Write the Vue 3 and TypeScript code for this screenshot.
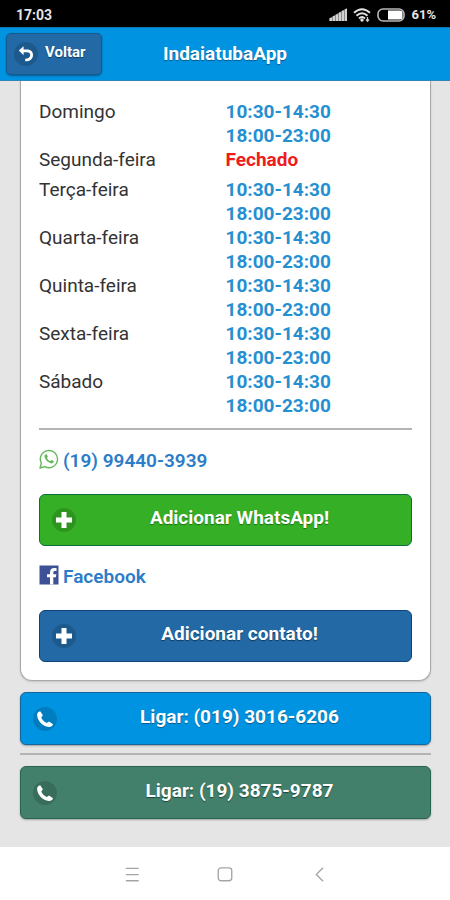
<script setup lang="ts">
interface DaySchedule {
  day: string
  hours: string[]
  closed?: boolean
}

const open: string[] = ['10:30-14:30', '18:00-23:00']

const schedule: DaySchedule[] = [
  { day: 'Domingo', hours: open },
  { day: 'Segunda-feira', hours: ['Fechado'], closed: true },
  { day: 'Terça-feira', hours: open },
  { day: 'Quarta-feira', hours: open },
  { day: 'Quinta-feira', hours: open },
  { day: 'Sexta-feira', hours: open },
  { day: 'Sábado', hours: open },
]
</script>

<template>
  <div class="screen">
    <div class="status">
      <span>17:03</span>
      <div class="status-icons">
        <svg class="signal" viewBox="0 0 18 13" aria-hidden="true">
          <path d="M0 13V10.600L18 0V13Z" fill="#8a8a8a" />
          <path d="M1 13v-3h2v3zM4 13v-5h2v5zM7 13V6.500h2V13zM10 13V4.500h2V13zM13 13V2.800h2V13zM16 13V1h2v12z" fill="#d2d2d2" />
        </svg>
        <svg class="wifi" viewBox="0 0 18 14" aria-hidden="true">
          <g fill="none" stroke="#e2e2e2" stroke-width="2">
            <path d="M1 4.800Q9-2.400 17 4.800" />
            <path d="M3.500 7.700Q9 2.800 14.500 7.700" />
            <path d="M6 10.400Q9 7.700 12 10.400" />
          </g>
          <circle cx="9" cy="12" r="1.700" fill="#e2e2e2" />
          <path d="M14.500 9v4M13 11.500l1.500 1.800 1.500-1.800" fill="none" stroke="#d0d0d0" stroke-width="1.200" />
        </svg>
        <svg class="battery" viewBox="0 0 28 14" aria-hidden="true">
          <rect x="1" y="1" width="26" height="12" rx="5" fill="none" stroke="#b8b8b8" stroke-width="1.600" />
          <path d="M11 2.500h12q2.500 0 2.500 2.500v4q0 2.500-2.500 2.500H11z" fill="#fff" />
        </svg>
        <span class="percent">61%</span>
      </div>
    </div>

    <header class="bar">
      <button class="back" type="button">
        <span class="disc">
          <svg viewBox="0 0 16 16" aria-hidden="true">
            <path d="M0.800 4.600 5.600 0.300V3.400H9.200C12.900 3.400 15 5.700 15 8.900 15 12.800 11.800 15.300 7.200 15.300V12.800C10.200 12.800 12.200 11.300 12.200 9 12.200 7.200 11 6.200 9 6.200H5.600V9.200Z" fill="#fff" />
          </svg>
        </span>
        <span class="label">Voltar</span>
      </button>
      <h1>IndaiatubaApp</h1>
    </header>

    <main>
      <section class="card">
        <table>
          <tbody>
            <tr v-for="item in schedule" :key="item.day" :class="{ closed: item.closed }">
              <th scope="row">{{ item.day }}</th>
              <td>
                <div v-for="slot in item.hours" :key="slot">{{ slot }}</div>
              </td>
            </tr>
          </tbody>
        </table>

        <hr />

        <a class="contact" href="https://wa.me/5519994403939">
          <svg viewBox="0 0 20 20" aria-hidden="true">
            <path d="M1 19 2.400 14.200A8.600 8.600 0 1 1 5.800 17.600Z" fill="none" stroke="#62b957" stroke-width="1.400" stroke-linejoin="round" />
            <path d="M7 5.300C6.300 5.300 5.400 6.200 5.500 7.600 5.700 10.400 9.500 14.200 12.500 14.400 14 14.400 15 13.200 14.800 12.100L12.500 10.900 11.300 12.100C9.800 11.500 8.600 10.300 8 8.900L8.800 7.800 7.900 5.500Z" fill="#62b957" />
          </svg>
          (19) 99440-3939
        </a>

        <button class="action green" type="button">
          <span class="disc">
            <svg viewBox="0 0 16 16" aria-hidden="true"><path d="M5.500 0h5v5.500H16v5h-5.500V16h-5v-5.500H0v-5h5.500z" fill="#fff" /></svg>
          </span>
          <span class="label">Adicionar WhatsApp!</span>
        </button>

        <a class="contact" href="https://www.facebook.com/">
          <svg viewBox="0 0 20 20" aria-hidden="true">
            <rect x="0.500" y="0.500" width="19" height="19" fill="#3c5295" />
            <path d="M11 19.500V12.300H8V9.300h3V7.400C11 4.500 12.700 3 15.300 3H17.500V6H15.900C14.700 6 14.300 6.500 14.300 7.600V9.300H17.300L16.900 12.300H14.300V19.500Z" fill="#fff" />
          </svg>
          Facebook
        </a>

        <button class="action navy" type="button">
          <span class="disc">
            <svg viewBox="0 0 16 16" aria-hidden="true"><path d="M5.500 0h5v5.500H16v5h-5.500V16h-5v-5.500H0v-5h5.500z" fill="#fff" /></svg>
          </span>
          <span class="label">Adicionar contato!</span>
        </button>
      </section>

      <a class="action sky" href="tel:01930166206">
        <span class="disc">
          <svg viewBox="0 0 16 16" aria-hidden="true"><path d="M3.200 0.300 5.900 4.300 4.300 6.400C5.200 8.900 7.200 10.900 9.800 12L12 10.600 16 13.200C15.600 15 13.900 16 11.800 15.900 5.800 15.600 0.200 9.500 0.100 4 0.100 2 1.300 0.500 3.200 0.300Z" fill="#fff" /></svg>
        </span>
        <span class="label">Ligar: (019) 3016-6206</span>
      </a>
      <hr />
      <a class="action moss" href="tel:1938759787">
        <span class="disc">
          <svg viewBox="0 0 16 16" aria-hidden="true"><path d="M3.200 0.300 5.900 4.300 4.300 6.400C5.200 8.900 7.200 10.900 9.800 12L12 10.600 16 13.200C15.600 15 13.900 16 11.800 15.900 5.800 15.600 0.200 9.500 0.100 4 0.100 2 1.300 0.500 3.200 0.300Z" fill="#fff" /></svg>
        </span>
        <span class="label">Ligar: (19) 3875-9787</span>
      </a>
    </main>

    <nav class="system">
      <button type="button" aria-label="Menu">
        <svg viewBox="0 0 16 16" aria-hidden="true"><path d="M2.500 3h11.500M2.500 8.500h11.500M2.500 14h11.500" /></svg>
      </button>
      <button type="button" aria-label="Início">
        <svg viewBox="0 0 16 16" aria-hidden="true"><rect x="2" y="2.500" width="12" height="11.500" rx="2.500" /></svg>
      </button>
      <button type="button" aria-label="Voltar">
        <svg viewBox="0 0 16 16" aria-hidden="true"><path d="M12.500 2.500 6.500 8.500 12.500 14.500" /></svg>
      </button>
    </nav>
  </div>
</template>

<style>
body {
  margin: 0;
  background: #e5e5e5;
}
</style>

<style scoped>
.screen {
  display: flex;
  flex-direction: column;
  min-height: 100vh;
  font-family: Roboto, "Liberation Sans", sans-serif;
  font-size: 19px;
  line-height: 24px;
  color: #333;
  background: #e5e5e5;
}

.screen *,
.screen {
  box-sizing: border-box;
}

.status {
  display: flex;
  align-items: center;
  justify-content: space-between;
  height: 27px;
  padding: 2px 14px 0 16px;
  background: #000;
  color: #e4e4e4;
  font-size: 14px;
  font-weight: 700;
}

.status-icons {
  display: flex;
  align-items: center;
  gap: 6px;
}

.signal {
  width: 18px;
  height: 13px;
}

.wifi {
  width: 18px;
  height: 14px;
}

.battery {
  width: 28px;
  height: 14px;
}

.percent {
  font-size: 13px;
}

.bar {
  display: grid;
  grid-template-columns: 1fr auto 1fr;
  align-items: center;
  height: 54px;
  padding: 0 6px;
  background: #0093e1;
  border-top: 1px solid #0b78b4;
  border-bottom: 1px solid #2f86b8;
}

h1 {
  margin: 0;
  color: #fff;
  font-size: 19px;
  font-weight: 700;
  text-shadow: 0 1px 1px #075a8a;
}

.back {
  display: flex;
  align-items: center;
  justify-self: start;
  gap: 7px;
  height: 42px;
  padding: 0 15px 0 7px;
  border: 1px solid #155a8d;
  border-radius: 5px;
  background: #2269a5;
  box-shadow: 0 1px 2px #0a5c93;
  color: #fff;
  font: inherit;
  font-size: 15px;
  font-weight: 700;
  text-shadow: 0 1px 1px #103a5c;
}

.disc {
  display: flex;
  flex: none;
  align-items: center;
  justify-content: center;
  width: 24px;
  height: 24px;
  border-radius: 50%;
  background: rgba(0, 0, 0, 0.15);
}

.disc svg {
  width: 16px;
  height: 16px;
}

.label {
  padding-bottom: 4px;
}

main {
  flex: 1;
  padding: 0 19px 28px 20px;
}

.card {
  padding: 19px 18px 18px;
  border: 1px solid #a8a8a8;
  border-top: 0;
  border-radius: 0 0 12px 12px;
  background: #fff;
  box-shadow: 0 1px 2px rgba(0, 0, 0, 0.15);
}

table {
  width: 100%;
  table-layout: fixed;
  border-collapse: collapse;
}

th,
td {
  width: 50%;
  padding: 0;
  text-align: left;
  vertical-align: top;
}

th {
  font-weight: 400;
}

td {
  color: #258fd0;
  font-weight: 700;
}

.closed th,
.closed td {
  padding-bottom: 6px;
}

.closed td {
  color: #ee1c1c;
}

hr {
  height: 2px;
  margin: 10px 0 0;
  border: 0;
  background: #b4b4b4;
}

.contact {
  display: flex;
  align-items: center;
  gap: 4px;
  width: fit-content;
  margin-top: 19px;
  color: #2b7cc9;
  font-weight: 600;
  text-decoration: none;
}

.contact svg {
  width: 20px;
  height: 20px;
  margin-bottom: 4px;
}

.action {
  display: grid;
  grid-template-columns: 24px 1fr;
  gap: 4px;
  align-items: center;
  width: 100%;
  height: 53px;
  margin-top: 21px;
  padding: 0 12px;
  border: 1px solid;
  border-radius: 6px;
  color: #fff;
  font: inherit;
  font-weight: 700;
  text-align: center;
  text-decoration: none;
}

.card .action {
  height: 52px;
}

.green {
  border-color: #0b6b42;
  background: #35af25;
  text-shadow: 0 1px 1px #1d7012;
}

.navy {
  border-color: #0d4577;
  background: #2269a5;
  text-shadow: 0 1px 1px #103a5c;
}

.sky {
  margin-top: 11px;
  border-color: #13679e;
  background: #0093e1;
  box-shadow: 0 1px 2px rgba(0, 0, 0, 0.3);
  text-shadow: 0 1px 1px #075a8a;
}

.moss {
  margin-top: 11px;
  border-color: #28664f;
  background: #42806b;
  box-shadow: 0 1px 2px rgba(0, 0, 0, 0.3);
  text-shadow: 0 1px 1px #1d4638;
}

main > hr {
  margin-top: 8px;
}

.system {
  display: flex;
  align-items: center;
  justify-content: center;
  gap: 69px;
  height: 54px;
  background: #fff;
}

.system button {
  display: flex;
  padding: 3px;
  border: 0;
  background: none;
}

.system svg {
  width: 18px;
  height: 18px;
  fill: none;
  stroke: #a5a5a5;
  stroke-width: 1.2;
}
</style>
